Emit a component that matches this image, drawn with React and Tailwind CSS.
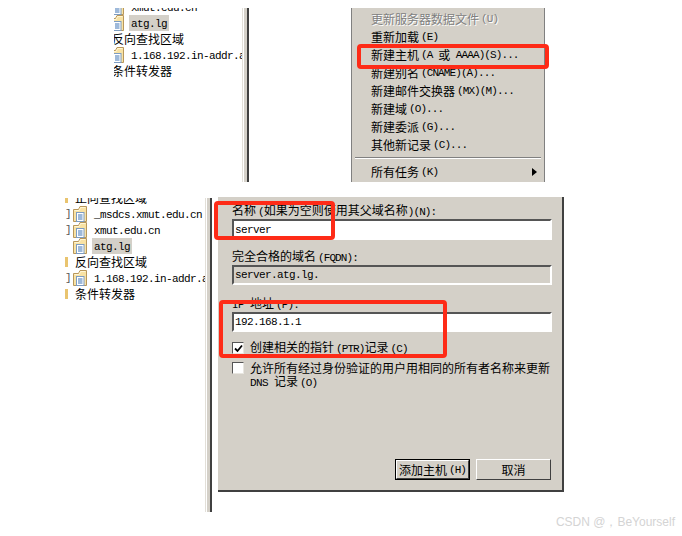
import React from "react";

function T({ children }) {
  const parts = String(children).split(/([\x00-\x7f]+)/).filter(Boolean);
  return (
    <>
      {parts.map((p, i) =>
        /^[\x00-\x7f]+$/.test(p) ? (
          <span
            key={i}
            className={
              "font-['Liberation_Mono',monospace] text-[11px] whitespace-pre " +
              (p.includes("(") ? "tracking-[-0.9px] " : "tracking-[-0.6px] ") +
              (p[0] === "(" ? "ml-[2px]" : "")
            }
          >
            {p}
          </span>
        ) : (
          <span key={i}>{p}</span>
        )
      )}
    </>
  );
}

function ZoneIcon() {
  return (
    <svg width="14" height="16" viewBox="0 0 14 16" className="shrink-0">
      <path d="M0.5 3.5 L0.5 15.5 L13.5 15.5 L13.5 0.5 L7 0.5 L5.5 3.5 Z" fill="#f8e2a4" stroke="#b8975a" strokeWidth="1" />
      <path d="M1.5 4.5 L6.2 4.5 L7.6 1.5 L12.5 1.5" fill="none" stroke="#fff6d6" strokeWidth="1" />
      <rect x="3.5" y="6.5" width="7.5" height="9" fill="#ffffff" stroke="#7d9cc2" strokeWidth="1" />
      <path d="M5 9 H9.5 M5 11 H9.5 M5 13 H9.5" stroke="#3f74b5" strokeWidth="1" />
    </svg>
  );
}

function ZoneRow({ name, selected, prefix }) {
  return (
    <div className="flex h-[16px] items-center whitespace-nowrap">
      {prefix}
      <ZoneIcon />
      <span className={"ml-[5px] flex h-[16px] items-center px-[2px] pt-[1px] " + (selected ? "bg-[#d4d0c8]" : "")}>
        <T>{name}</T>
      </span>
    </div>
  );
}

function FolderRow({ name, prefix }) {
  return (
    <div className="flex h-[16px] items-center whitespace-nowrap">
      {prefix}
      <span className="ml-[2px]">{name}</span>
    </div>
  );
}

function Bracket() {
  return <span className="flex w-[9px] shrink-0 justify-start pl-[1px] font-['Liberation_Mono',monospace] text-[11px] text-[#555]">]</span>;
}

function Sliver() {
  return (
    <span className="flex w-[9px] shrink-0 justify-start pl-[1px]">
      <span className="h-[10px] w-[3px] bg-[#e9c46f]" />
    </span>
  );
}

function VBar() {
  return (
    <div className="flex w-[7px] shrink-0 self-stretch">
      <div className="w-[1px] bg-[#e2dfd8]" />
      <div className="w-[1px] bg-white" />
      <div className="w-[3px] bg-[#d4d0c8]" />
      <div className="w-[2px] bg-[#404040]" />
    </div>
  );
}

function MenuRow({ children, disabled }) {
  return (
    <div className={"flex h-[18px] items-center pl-[19px] " + (disabled ? "text-[#808080] [text-shadow:1px_1px_0_#fff]" : "")}>
      <T>{children}</T>
    </div>
  );
}

function Field({ value, readOnly, className }) {
  return (
    <div className={"flex w-[320px] items-center border-2 border-t-[#555] border-l-[#555] border-r-white border-b-white pl-[1px] " + (readOnly ? "bg-[#d4d0c8] " : "bg-white ") + className}>
      <T>{value}</T>
    </div>
  );
}

function Check({ checked }) {
  return (
    <div className="flex h-[12px] w-[12px] shrink-0 items-center justify-center border border-t-[#555] border-l-[#555] border-r-[#e8e6e0] border-b-[#e8e6e0] bg-white">
      {checked && (
        <svg width="9" height="9" viewBox="0 0 9 9">
          <path d="M1 4.5 L3.5 7 L8 1.5" fill="none" stroke="#000" strokeWidth="1.8" />
        </svg>
      )}
    </div>
  );
}

function Btn({ children, primary }) {
  return (
    <div className={"flex h-[21px] w-[75px] items-center justify-center bg-[#d4d0c8] " + (primary ? "border border-black" : "")}>
      <div className="flex h-full w-full items-center justify-center border border-t-white border-l-white border-r-[#404040] border-b-[#404040]">
        <T>{children}</T>
      </div>
    </div>
  );
}

export default function App() {
  return (
    <div className="relative h-[536px] w-[682px] overflow-hidden bg-white font-['Noto_Sans_CJK_SC',sans-serif] text-[12px] leading-[14px] text-black">
      {/* top capture */}
      <div className="ml-[114px] mt-[8px] flex h-[174px]">
        <div className="w-[128px] shrink-0 overflow-hidden">
          <div className="-ml-[4px] -mt-[9px]">
            <ZoneRow name="xmut.edu.cn" />
            <ZoneRow name="atg.lg" selected />
            <FolderRow name="反向查找区域" />
            <ZoneRow name="1.168.192.in-addr.arpa" />
            <FolderRow name="条件转发器" />
          </div>
        </div>
        <VBar />
        <div className="ml-[102px] flex w-[194px] shrink-0 flex-col border-x border-x-[#808080] bg-[#d4d0c8] pt-[2px]">
          <MenuRow disabled>更新服务器数据文件(U)</MenuRow>
          <MenuRow>重新加载(E)</MenuRow>
          <MenuRow>新建主机(A 或 AAAA)(S)...</MenuRow>
          <MenuRow>新建别名(CNAME)(A)...</MenuRow>
          <MenuRow>新建邮件交换器(MX)(M)...</MenuRow>
          <MenuRow>新建域(O)...</MenuRow>
          <MenuRow>新建委派(G)...</MenuRow>
          <MenuRow>其他新记录(C)...</MenuRow>
          <div className="mx-[3px] mt-[3px] border-t border-b border-t-[#808080] border-b-white" />
          <div className="mt-[4px] flex items-center justify-between pr-[7px]">
            <MenuRow>所有任务(K)</MenuRow>
            <svg width="5" height="8" viewBox="0 0 5 8">
              <path d="M0 0 L5 4 L0 8 Z" fill="#000" />
            </svg>
          </div>
        </div>
      </div>

      {/* bottom capture */}
      <div className="ml-[64px] mt-[16px] flex h-[314px]">
        <div className="w-[141px] shrink-0 overflow-hidden">
          <div className="-mt-[8px]">
            <FolderRow name="正向查找区域" prefix={<Sliver />} />
            <ZoneRow name="_msdcs.xmut.edu.cn" prefix={<Bracket />} />
            <ZoneRow name="xmut.edu.cn" prefix={<Bracket />} />
            <ZoneRow name="atg.lg" selected prefix={<span className="w-[9px] shrink-0" />} />
            <FolderRow name="反向查找区域" prefix={<Sliver />} />
            <ZoneRow name="1.168.192.in-addr.arpa" prefix={<Bracket />} />
            <FolderRow name="条件转发器" prefix={<Sliver />} />
          </div>
        </div>
        <VBar />
        <div className="-mt-[1px] ml-[6px] flex h-[295px] w-[346px] shrink-0 flex-col border-r-2 border-b-2 border-r-[#404040] border-b-[#404040] bg-[#d4d0c8] pl-[14px] pr-[10px] pt-[6px]">
          <div className="h-[14px] whitespace-nowrap"><T>名称(如果为空则使用其父域名称)(N):</T></div>
          <Field value="server" className="mt-[2px] h-[21px]" />
          <div className="mt-[9px] h-[14px] whitespace-nowrap"><T>完全合格的域名(FQDN):</T></div>
          <Field value="server.atg.lg." readOnly className="mt-[2px] h-[20px]" />
          <div className="mt-[11px] h-[14px] whitespace-nowrap"><T>IP 地址(P):</T></div>
          <Field value="192.168.1.1" className="mt-[2px] h-[20px]" />
          <div className="mt-[10px] flex h-[12px] items-center gap-[6px]">
            <Check checked />
            <span className="whitespace-nowrap"><T>创建相关的指针(PTR)记录(C)</T></span>
          </div>
          <div className="mt-[8px] flex gap-[6px]">
            <Check />
            <div className="-mt-[1px] leading-[13px]">
              <div className="h-[13px] whitespace-nowrap"><T>允许所有经过身份验证的用户用相同的所有者名称来更新</T></div>
              <div className="h-[13px] whitespace-nowrap"><T>DNS 记录(O)</T></div>
            </div>
          </div>
          <div className="mt-auto mb-[10px] flex justify-end gap-[6px] pr-[1px]">
            <Btn primary>添加主机(H)</Btn>
            <Btn>取消</Btn>
          </div>
        </div>
      </div>

      {/* watermark */}
      <div className="mt-[3px] flex justify-end pr-[7px] font-['Liberation_Sans',sans-serif] text-[12px] leading-[14px] text-[#d4d4d4]">
        CSDN @，BeYourself
      </div>

      {/* annotation boxes */}
      <div className="absolute left-[357px] top-[44px] h-[25px] w-[192px] rounded-[4px] border-4 border-[#fe2b17]" />
      <div className="absolute left-[214px] top-[201px] h-[39px] w-[121px] rounded-[4px] border-4 border-[#fe2b17]" />
      <div className="absolute left-[219px] top-[300px] h-[58px] w-[228px] rounded-[4px] border-4 border-[#fe2b17]" />
    </div>
  );
}
